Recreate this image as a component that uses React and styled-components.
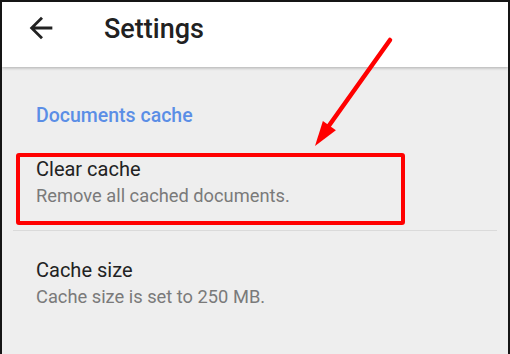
import styled, { createGlobalStyle } from "styled-components";

const GlobalStyle = createGlobalStyle`
  html, body {
    margin: 0;
    padding: 0;
    background: #eeeeee;
  }
  body {
    font-family: Roboto, "Noto Sans", Arial, sans-serif;
  }
`;

const settings = [
  { title: "Clear cache", summary: "Remove all cached documents.", marked: true },
  { title: "Cache size", summary: "Cache size is set to 250 MB." },
];

const BackArrow = () => (
  <svg width="34" height="34" viewBox="0 0 24 24" fill="#222">
    <path d="M20 11H7.83l5.59-5.59L12 4l-8 8 8 8 1.41-1.41L7.83 13H20v-2z" />
  </svg>
);

const App = () => {
  return (
    <>
      <GlobalStyle />
      <Frame>
        <Toolbar>
          <BackButton>
            <BackArrow />
          </BackButton>
          <Title>Settings</Title>
        </Toolbar>
        <Content>
          <SectionHeader>Documents cache</SectionHeader>
          {settings.map((item, i) => (
            <Item key={item.title} $last={i === settings.length - 1}>
              <ItemTitle>{item.title}</ItemTitle>
              <ItemSummary>{item.summary}</ItemSummary>
              {item.marked && <Highlight />}
            </Item>
          ))}
        </Content>
        <Pointer width="510" height="354" viewBox="0 0 510 354">
          <line
            x1="390"
            y1="40"
            x2="328"
            y2="127"
            stroke="#ff0000"
            strokeWidth="4.5"
            strokeLinecap="round"
          />
          <polygon points="315,146 322.9,121 335.9,130.2" fill="#ff0000" />
        </Pointer>
      </Frame>
    </>
  );
};

export default App;

const Frame = styled.div`
  position: relative;
  box-sizing: border-box;
  width: 510px;
  height: 100vh;
  border-top: 2px solid #151515;
  border-left: 2px solid #151515;
  border-right: 2px solid #151515;
  background: #eeeeee;
  overflow: hidden;
`;

const Toolbar = styled.div`
  position: relative;
  z-index: 1;
  box-sizing: border-box;
  display: flex;
  align-items: flex-start;
  height: 65px;
  padding: 11px 0 0 22px;
  background: #ffffff;
  box-shadow: 0 1px 3px rgba(0, 0, 0, 0.28);
`;

const BackButton = styled.div`
  display: flex;
  width: 34px;
  height: 34px;
  margin-top: -2px;
  margin-right: 46px;
`;

const Title = styled.div`
  font-size: 27px;
  line-height: 32px;
  font-weight: 500;
  color: #212121;
`;

const Content = styled.div`
  display: flex;
  flex-direction: column;
  padding-top: 38px;
`;

const SectionHeader = styled.div`
  padding-left: 34px;
  margin-bottom: 3px;
  font-size: 19.5px;
  line-height: 22px;
  font-weight: 500;
  color: #5b8ee6;
`;

const Item = styled.div`
  position: relative;
  display: flex;
  flex-direction: column;
  padding: 26px 34px 22px;
  margin: 0 11px;
  border-bottom: ${(p) => (p.$last ? "none" : "1px solid #dadada")};
  & > div:first-child,
  & > div:nth-child(2) {
    margin-left: -11px;
  }
`;

const ItemTitle = styled.div`
  font-size: 20px;
  line-height: 26px;
  color: #222222;
`;

const ItemSummary = styled.div`
  margin-top: 2px;
  font-size: 18.3px;
  line-height: 24px;
  color: #7a7a7a;
`;

const Highlight = styled.div`
  position: absolute;
  top: 23px;
  left: 3px;
  width: 389px;
  height: 72px;
  box-sizing: border-box;
  border: 4.5px solid #ff0000;
  border-radius: 3px;
`;

const Pointer = styled.svg`
  position: absolute;
  top: -2px;
  left: -2px;
  z-index: 2;
  pointer-events: none;
`;
